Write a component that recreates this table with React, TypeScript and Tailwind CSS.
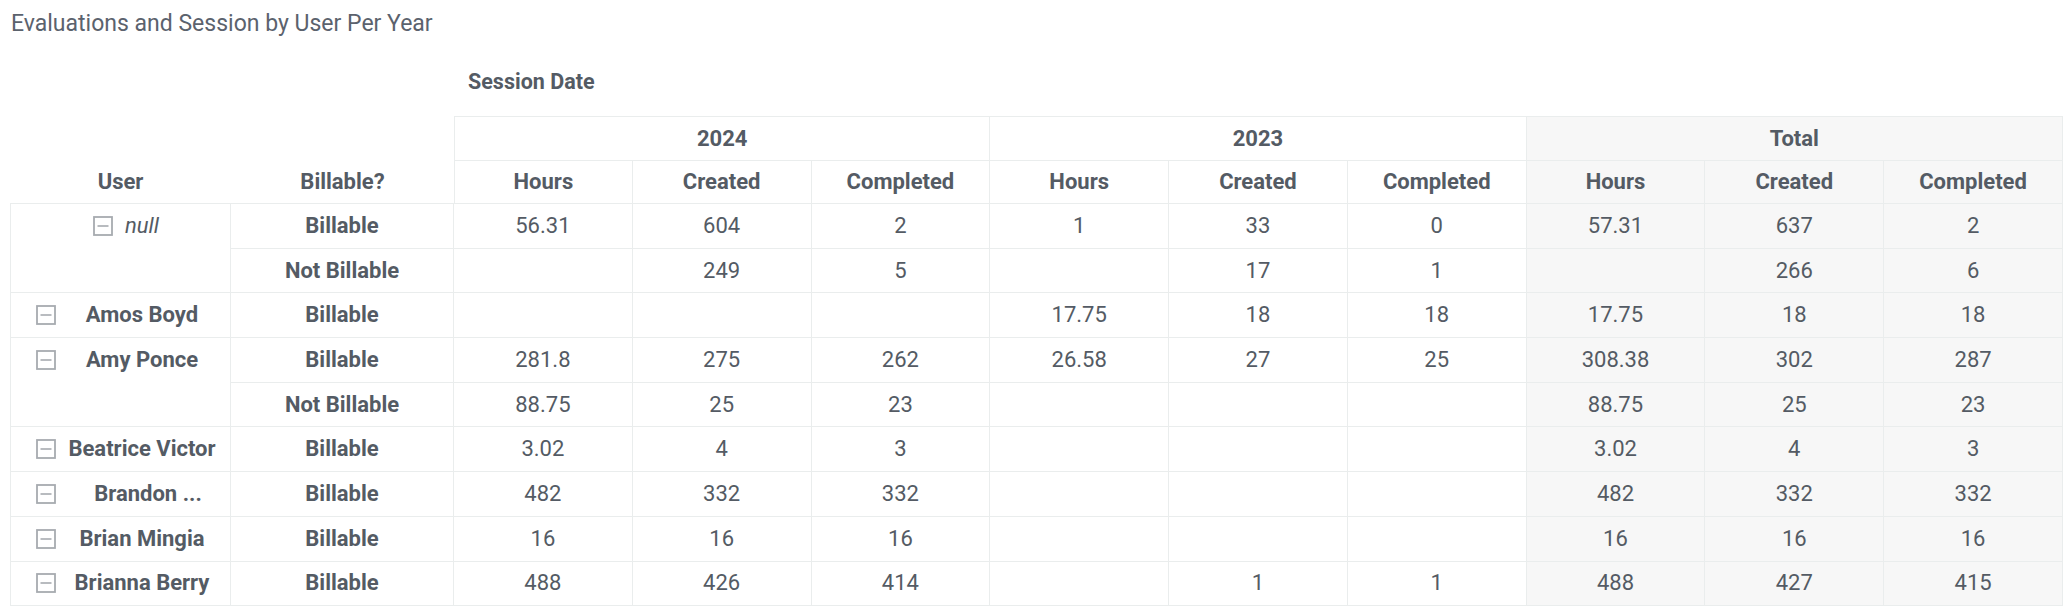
import React from "react";

type Group = { user: string; italic?: boolean; shift?: boolean; rows: [string, string[]][] };

const groups: Group[] = [
  {
    user: "null",
    italic: true,
    rows: [
      ["Billable", ["56.31", "604", "2", "1", "33", "0", "57.31", "637", "2"]],
      ["Not Billable", ["", "249", "5", "", "17", "1", "", "266", "6"]],
    ],
  },
  { user: "Amos Boyd", rows: [["Billable", ["", "", "", "17.75", "18", "18", "17.75", "18", "18"]]] },
  {
    user: "Amy Ponce",
    rows: [
      ["Billable", ["281.8", "275", "262", "26.58", "27", "25", "308.38", "302", "287"]],
      ["Not Billable", ["88.75", "25", "23", "", "", "", "88.75", "25", "23"]],
    ],
  },
  { user: "Beatrice Victor", rows: [["Billable", ["3.02", "4", "3", "", "", "", "3.02", "4", "3"]]] },
  { user: "Brandon ...", shift: true, rows: [["Billable", ["482", "332", "332", "", "", "", "482", "332", "332"]]] },
  { user: "Brian Mingia", rows: [["Billable", ["16", "16", "16", "", "", "", "16", "16", "16"]]] },
  { user: "Brianna Berry", rows: [["Billable", ["488", "426", "414", "", "1", "1", "488", "427", "415"]]] },
];

const metrics = ["Hours", "Created", "Completed"];
const years = ["2024", "2023", "Total"];

function CollapseIcon() {
  return (
    <svg width="20" height="20" viewBox="0 0 20 20" className="shrink-0">
      <rect x="1" y="1" width="18" height="18" fill="none" stroke="#a7abb0" strokeWidth="1.8" />
      <line x1="4.5" y1="10" x2="15.5" y2="10" stroke="#a7abb0" strokeWidth="1.6" />
    </svg>
  );
}

export default function App() {
  return (
    <div className="w-[2063px] h-[608px] overflow-hidden bg-white font-[Roboto,sans-serif] text-[#545b64]">
      <div className="h-[47px] pl-[11px] flex items-center text-[23px] text-[#5b626d] leading-none">
        Evaluations and Session by User Per Year
      </div>
      <div className="h-[69px] pl-[468px] flex items-center text-[21.5px] font-bold leading-none">
        Session Date
      </div>
      <table className="ml-[10px] w-[2053px] table-fixed border-separate border-spacing-0 text-[22px] leading-none">
        <colgroup>
          <col className="w-[221px]" />
          <col className="w-[223px]" />
          {Array.from({ length: 9 }).map((_, i) => (
            <col key={i} />
          ))}
        </colgroup>
        <thead>
          <tr className="h-[44px]">
            <th className="p-0" />
            <th className="p-0" />
            {years.map((y, i) => (
              <th
                key={y}
                colSpan={3}
                className={`p-0 border-t border-r border-[#eaeded] font-bold text-center align-middle ${
                  i === 0 ? "border-l" : ""
                } ${y === "Total" ? "bg-[#f7f7f7]" : ""}`}
              >
                {y}
              </th>
            ))}
          </tr>
          <tr className="h-[44px]">
            <th className="p-0 border-b border-[#eaeded] font-bold text-center align-middle">User</th>
            <th className="p-0 border-b border-[#eaeded] font-bold text-center align-middle">Billable?</th>
            {years.map((y, yi) =>
              metrics.map((m, mi) => (
                <th
                  key={y + m}
                  className={`p-0 border-t border-b border-r border-[#eaeded] font-bold text-center align-middle ${
                    yi === 0 && mi === 0 ? "border-l" : ""
                  } ${y === "Total" ? "bg-[#f7f7f7]" : ""}`}
                >
                  {m}
                </th>
              ))
            )}
          </tr>
        </thead>
        <tbody>
          {groups.map((g) =>
            g.rows.map(([bill, vals], ri) => (
              <tr key={g.user + bill} className="h-[44.7px]">
                {ri === 0 && (
                  <td rowSpan={g.rows.length} className="border-l border-r border-b border-[#eaeded] align-top p-0">
                    {g.italic ? (
                      <div className="h-[43.7px] flex items-center pl-[82px] gap-[12px]">
                        <CollapseIcon />
                        <span className="italic font-normal">{g.user}</span>
                      </div>
                    ) : (
                      <div className="h-[43.7px] flex items-center pl-[25px] pr-[2px]">
                        <CollapseIcon />
                        <span className={`flex-1 text-center font-bold whitespace-nowrap ${g.shift ? "pl-[12px]" : ""}`}>
                          {g.user}
                        </span>
                      </div>
                    )}
                  </td>
                )}
                <td className="p-0 border-r border-b border-[#eaeded] text-center font-bold align-middle">{bill}</td>
                {vals.map((v, vi) => (
                  <td
                    key={vi}
                    className={`p-0 border-r border-b border-[#eaeded] text-center align-middle ${
                      vi >= 6 ? "bg-[#f7f7f7]" : ""
                    }`}
                  >
                    {v}
                  </td>
                ))}
              </tr>
            ))
          )}
        </tbody>
      </table>
    </div>
  );
}
